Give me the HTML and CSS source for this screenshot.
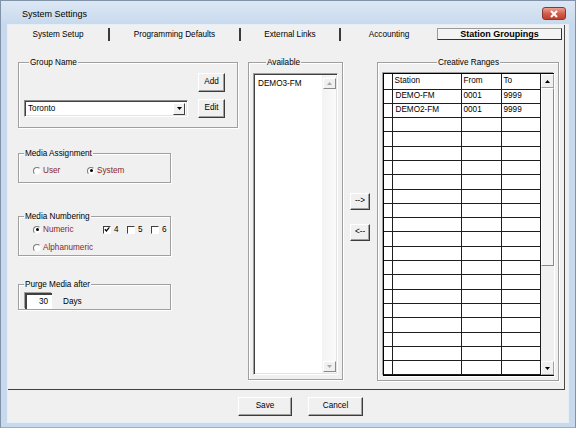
FILE: index.html
```html
<!DOCTYPE html>
<html lang="en">
<head>
    <meta charset="UTF-8">
    <title>System Settings</title>
    <link rel="stylesheet" href="styles.css">
</head>
<body>
<div class="window">
    <div class="titlebar">
        <span class="title">System Settings</span>
        <span class="close">
            <svg width="10" height="8" viewBox="0 0 10 8"><path d="M2 1 L8 7 M8 1 L2 7" stroke="#fff" stroke-width="2"/></svg>
        </span>
    </div>

    <div class="client">
        <div class="panel">
            <!-- tabs -->
            <div class="tabs">
                <div class="tab t1">System Setup</div>
                <div class="tab t2">Programming Defaults</div>
                <div class="tab t3">External Links</div>
                <div class="tab t4">Accounting</div>
                <div class="tab active">Station Groupings</div>
            </div>

            <div class="content">
                <!-- left column -->
                <div class="left-col">
                    <div class="group group-name">
                        <div class="cap">Group Name</div>
                        <div class="row row-add"><button class="btn btn-sm">Add</button></div>
                        <div class="row row-combo">
                            <div class="combo">
                                <span class="combo-text">Toronto</span>
                                <span class="combo-btn"><svg width="5" height="3" viewBox="0 0 5 3"><polygon points="0,0 5,0 2.5,3" fill="#000"/></svg></span>
                            </div>
                            <button class="btn btn-sm">Edit</button>
                        </div>
                    </div>

                    <div class="group media-assign">
                        <div class="cap">Media Assignment</div>
                        <div class="row opts">
                            <span class="opt w-user"><span class="radio"></span><span class="lbl">User</span></span>
                            <span class="opt"><span class="radio on"></span><span class="lbl">System</span></span>
                        </div>
                    </div>

                    <div class="group media-num">
                        <div class="cap">Media Numbering</div>
                        <div class="row opts">
                            <span class="opt w-numeric"><span class="radio on"></span><span class="lbl">Numeric</span></span>
                            <span class="opt w-chk"><span class="chk"><svg width="7" height="7" viewBox="0 0 7 7"><path d="M1 3.2 L2.8 5.2 L6.2 1" stroke="#000" stroke-width="1.4" fill="none"/></svg></span>4</span>
                            <span class="opt w-chk"><span class="chk"></span>5</span>
                            <span class="opt"><span class="chk"></span>6</span>
                        </div>
                        <div class="row opts row2">
                            <span class="opt"><span class="radio"></span><span class="lbl">Alphanumeric</span></span>
                        </div>
                    </div>

                    <div class="group purge">
                        <div class="cap">Purge Media after</div>
                        <div class="row purge-row">
                            <span class="textbox">30</span>
                            <span class="days">Days</span>
                        </div>
                    </div>
                </div>

                <!-- available list -->
                <div class="group available">
                    <div class="cap">Available</div>
                    <div class="listbox">
                        <div class="list-items">
                            <div class="item">DEMO3-FM</div>
                        </div>
                        <div class="vscroll light">
                            <span class="sb-btn up"><svg width="5" height="3" viewBox="0 0 5 3"><polygon points="0,3 5,3 2.5,0" fill="#a8a8a8"/></svg></span>
                            <span class="sb-fill"></span>
                            <span class="sb-btn down"><svg width="5" height="3" viewBox="0 0 5 3"><polygon points="0,0 5,0 2.5,3" fill="#a8a8a8"/></svg></span>
                        </div>
                    </div>
                </div>

                <!-- move buttons -->
                <div class="arrows">
                    <button class="btn btn-arrow">--&gt;</button>
                    <button class="btn btn-arrow">&lt;--</button>
                </div>

                <!-- creative ranges grid -->
                <div class="group creative">
                    <div class="cap cap-center">Creative Ranges</div>
                    <div class="grid">
                        <table>
                            <colgroup><col class="c-rh"><col class="c-st"><col class="c-fr"><col class="c-to"></colgroup>
                            <thead>
                                <tr><th></th><th>Station</th><th>From</th><th>To</th></tr>
                            </thead>
                            <tbody id="rows"></tbody>
                        </table>
                        <div class="vscroll grid-sb">
                            <span class="sb-btn up"><svg width="5" height="3" viewBox="0 0 5 3"><polygon points="0,3 5,3 2.5,0" fill="#000"/></svg></span>
                            <span class="thumb"></span>
                            <span class="sb-fill"></span>
                            <span class="sb-btn down"><svg width="5" height="3" viewBox="0 0 5 3"><polygon points="0,0 5,0 2.5,3" fill="#000"/></svg></span>
                        </div>
                    </div>
                </div>
            </div>
        </div>

        <div class="footer">
            <button class="btn btn-save">Save</button>
            <button class="btn btn-cancel">Cancel</button>
        </div>
    </div>
</div>

<script>
    var ranges = [
        { station: 'DEMO-FM', from: '0001', to: '9999' },
        { station: 'DEMO2-FM', from: '0001', to: '9999' }
    ];

    var tbody = document.getElementById('rows');
    for (var i = 0; i < 20; i++) {
        var r = ranges[i] || { station: '', from: '', to: '' };
        var tr = document.createElement('tr');
        tr.innerHTML = '<td></td><td>' + r.station + '</td><td>' + r.from + '</td><td>' + r.to + '</td>';
        tbody.appendChild(tr);
    }
</script>
</body>
</html>
```

FILE: styles.css
```css
/* base */
* {
    box-sizing: border-box;
}

body {
    margin: 0;
    font-family: "Liberation Sans", Arial, sans-serif;
    font-size: 8.2px;
    color: #000;
}

button {
    font-family: inherit;
    font-size: inherit;
    color: #000;
    padding: 0;
    margin: 0;
}

/* window frame */
.window {
    width: 576px;
    height: 428px;
    background: #c8d9ed;
    border: 1px solid #8193a8;
    border-bottom-color: #86b3e0;
    display: flex;
    flex-direction: column;
}

.titlebar {
    height: 24px;
    display: flex;
    align-items: flex-start;
    padding: 0 9px 0 21px;
    background: linear-gradient(#dce7f4, #c8d9ed);
}

.title {
    margin-top: 7px;
    font-size: 9px;
    line-height: 13px;
}

.close {
    margin-left: auto;
    margin-top: 6px;
    width: 24px;
    height: 13px;
    border: 1px solid #843a33;
    border-radius: 3px;
    background: linear-gradient(#eaa395, #d35f4c 50%, #c23f2b);
    display: flex;
    align-items: center;
    justify-content: center;
}

.client {
    margin: 0 7px;
    height: 397px;
    background: #f0f0f0;
    box-shadow: 0 0 0 1px #e6eef8;
}

/* tab page */
.panel {
    width: 557px;
    height: 365px;
    border-right: 1px solid #4a4a4a;
    border-bottom: 1px solid #404040;
}

.tabs {
    display: flex;
    height: 17px;
}

.tab {
    margin-top: 3px;
    height: 13px;
    line-height: 13px;
    text-align: center;
}

.t1 { width: 102px; border-right: 2px solid #3a3a3a; }
.t2 { width: 131px; border-right: 2px solid #3a3a3a; }
.t3 { width: 100px; border-right: 2px solid #3a3a3a; }
.t4 { width: 96px; }

.tab.active {
    width: 125px;
    height: 12px;
    line-height: 10px;
    font-size: 9px;
    font-weight: bold;
    border: 1px solid;
    border-color: #9a9a9a #303030 #303030 #9a9a9a;
    background: #f4f4f4;
}

.content {
    display: flex;
    align-items: flex-start;
    padding: 20px 0 0 10px;
}

/* group boxes */
.group {
    border: 1px solid #a0a0a0;
    box-shadow: inset 1px 1px 0 #fff, 1px 1px 0 #fff;
}

.cap {
    width: fit-content;
    height: 13px;
    line-height: 13px;
    margin: -7px 0 0 5px;
    padding: 0 1px;
    background: #f0f0f0;
}

.cap-center {
    margin-left: auto;
    margin-right: auto;
}

.row {
    display: flex;
    align-items: center;
}

/* left column */
.left-col {
    width: 220px;
}

.group-name {
    padding: 0 12px 9px 5px;
}

.row-add {
    justify-content: flex-end;
    margin-top: 4px;
}

.row-combo {
    margin-top: 7px;
}

.combo {
    width: 164px;
    height: 17px;
    display: flex;
    align-items: center;
    background: #fff;
    border: 1px solid;
    border-color: #8a8a8a #fff #fff #8a8a8a;
    box-shadow: inset 1px 1px 0 #404040, inset -1px -1px 0 #e3e3e3;
}

.combo-text {
    padding-left: 3px;
}

.combo-btn {
    margin-left: auto;
    margin-right: 2px;
    width: 12px;
    height: 12px;
    display: flex;
    align-items: center;
    justify-content: center;
    background: #f0f0f0;
    border: 1px solid;
    border-color: #fff #404040 #404040 #fff;
}

.row-combo .btn-sm {
    margin-left: auto;
}

.btn {
    background: #f0f0f0;
    border: 1px solid;
    border-color: #fff #3c3c3c #3c3c3c #fff;
    box-shadow: inset -1px -1px 0 #a0a0a0;
    line-height: 1;
}

.btn-sm {
    width: 27px;
    height: 19px;
}

.media-assign {
    width: 153px;
    margin-top: 25px;
    padding: 0 0 5px 14px;
}

.media-assign .cap,
.media-num .cap,
.purge .cap {
    margin-left: -9px;
}

.opts {
    height: 13px;
}

.media-assign .opts {
    margin-top: 4px;
}

.opt {
    display: flex;
    align-items: center;
}

.w-user { width: 54px; }
.w-numeric { width: 70px; }
.w-chk { width: 24px; }

.radio {
    width: 8px;
    height: 8px;
    border-radius: 50%;
    border: 1px solid;
    border-color: #7a7a7a #f8f8f8 #f8f8f8 #7a7a7a;
    background: #fff;
    margin-right: 2px;
    display: flex;
    align-items: center;
    justify-content: center;
}

.radio.on::after {
    content: "";
    width: 3px;
    height: 3px;
    border-radius: 50%;
    background: #000;
}

.lbl {
    color: #8b1f1f;
}

.chk {
    width: 8px;
    height: 8px;
    margin-right: 3px;
    background: #fff;
    border: 1px solid;
    border-color: #404040 #fff #fff #404040;
    display: flex;
    align-items: center;
    justify-content: center;
}

.media-num {
    width: 153px;
    margin-top: 33px;
    padding: 0 0 1px 14px;
}

.media-num .row2 {
    margin-top: 5px;
}

.purge {
    width: 153px;
    margin-top: 28px;
    padding: 0 0 0 6px;
}

.purge .cap {
    margin-left: -1px;
}

.purge-row {
    margin-top: 2px;
}

.textbox {
    width: 27px;
    height: 16px;
    line-height: 13px;
    text-align: right;
    padding-right: 4px;
    background: #fff;
    border-top: 2px solid #404040;
    border-left: 2px solid #404040;
    box-shadow: -1px -1px 0 #a0a0a0;
}

.days {
    margin-left: 11px;
}

/* available list */
.available {
    width: 95px;
    margin-left: 10px;
    padding: 0 4px 4px 4px;
}

.available .cap {
    margin-left: 13px;
}

.listbox {
    margin-top: 4px;
    height: 302px;
    display: flex;
    background: #fff;
    border: 1px solid;
    border-color: #a0a0a0 #fff #fff #a0a0a0;
    box-shadow: inset 1px 1px 0 #404040, inset -1px -1px 0 #e3e3e3;
}

.list-items {
    flex: 1;
    padding: 3px 0 0 4px;
}

.item {
    line-height: 13px;
}

.vscroll {
    width: 14px;
    display: flex;
    flex-direction: column;
    align-items: center;
}

.vscroll.light {
    background: linear-gradient(90deg, #f2f2f2, #fafafa);
    padding: 3px 0 1px;
    margin: 1px 1px 1px 0;
}

.sb-btn {
    width: 13px;
    height: 11px;
    display: flex;
    align-items: center;
    justify-content: center;
    background: #f0f0f0;
    border: 1px solid;
    border-color: #fff #8a8a8a #8a8a8a #fff;
}

.sb-fill {
    flex: 1;
}

/* arrows */
.arrows {
    width: 20px;
    margin-left: 7px;
    padding-top: 131px;
    display: flex;
    flex-direction: column;
}

.btn-arrow {
    width: 20px;
    height: 17px;
}

.btn-arrow + .btn-arrow {
    margin-top: 14px;
}

/* creative ranges */
.creative {
    width: 182px;
    margin-left: 7px;
    padding: 0 4px 4px 5px;
}

.grid {
    margin-top: 4px;
    height: 303px;
    display: flex;
    background: #fff;
    border: 1px solid #000;
    box-shadow: -1px -1px 0 #a0a0a0, 1px 1px 0 #fff;
}

table {
    width: 156px;
    table-layout: fixed;
    border-collapse: collapse;
    align-self: flex-start;
}

.c-rh { width: 8px; }
.c-st { width: 69px; }
.c-fr { width: 40px; }
.c-to { width: 39px; }

th, td {
    border-right: 1px solid #1e1e1e;
    border-bottom: 1px solid #1e1e1e;
    padding: 0 0 0 2px;
    text-align: left;
    font-weight: normal;
    white-space: nowrap;
    overflow: hidden;
    line-height: 12px;
}

th {
    height: 15px;
}

td {
    height: 14.3px;
}

td:nth-child(2) {
    padding-left: 3px;
}

.grid-sb {
    flex: 1;
    background: #f0f0f0;
}

.grid-sb .sb-btn {
    width: 13px;
    height: 14px;
    border-color: #fff #a0a0a0 #a0a0a0 #fff;
}

.grid-sb .thumb {
    width: 13px;
    height: 178px;
    background: #f4f4f4;
    border: 1px solid;
    border-color: #fff #8a8a8a #8a8a8a #fff;
}

/* footer */
.footer {
    display: flex;
    padding: 7px 0 0 230px;
}

.btn-save {
    width: 54px;
    height: 19px;
}

.btn-cancel {
    width: 55px;
    height: 19px;
    margin-left: 16px;
}
```
